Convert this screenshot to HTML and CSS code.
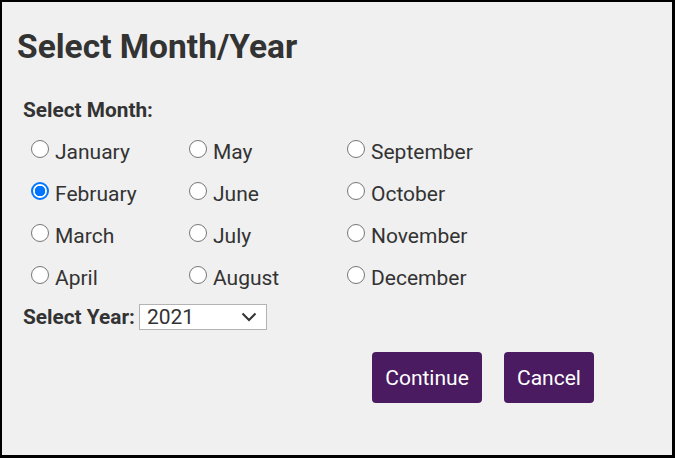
FILE: index.html
```html
<!DOCTYPE html>
<html>
<head>
<meta charset="utf-8">
<link rel="stylesheet" href="styles.css">
</head>
<body>
<div class="dialog">
  <h1 class="title">Select Month/Year</h1>
  <div class="form">
    <div class="field-label">Select Month:</div>
    <div class="months">
      <label class="opt"><input type="radio" name="m"><span>January</span></label>
      <label class="opt"><input type="radio" name="m"><span>May</span></label>
      <label class="opt"><input type="radio" name="m"><span>September</span></label>
      <label class="opt"><input type="radio" name="m" checked><span>February</span></label>
      <label class="opt"><input type="radio" name="m"><span>June</span></label>
      <label class="opt"><input type="radio" name="m"><span>October</span></label>
      <label class="opt"><input type="radio" name="m"><span>March</span></label>
      <label class="opt"><input type="radio" name="m"><span>July</span></label>
      <label class="opt"><input type="radio" name="m"><span>November</span></label>
      <label class="opt"><input type="radio" name="m"><span>April</span></label>
      <label class="opt"><input type="radio" name="m"><span>August</span></label>
      <label class="opt"><input type="radio" name="m"><span>December</span></label>
    </div>
    <div class="year-row">
      <span class="field-label inline">Select Year:</span>
      <div class="select-wrap">
        <select class="year">
          <option>2021</option>
        </select>
        <svg class="chev" width="16" height="10" viewBox="0 0 16 10"><path d="M1.5 1.5 L8 8 L14.5 1.5" fill="none" stroke="#333" stroke-width="2"/></svg>
      </div>
    </div>
    <div class="actions">
      <button class="btn btn-continue">Continue</button>
      <button class="btn btn-cancel">Cancel</button>
    </div>
  </div>
</div>
</body>
</html>
```

FILE: styles.css
```css
* { box-sizing: border-box; }
html, body { margin: 0; padding: 0; }
body {
  font-family: Roboto, "Liberation Sans", sans-serif;
  color: #333;
  background: #fff;
}
.dialog {
  width: 675px;
  height: 458px;
  background: #f0f0f0;
  border-style: solid;
  border-color: #000;
  border-width: 2px 3px 3px 2px;
  padding: 0 0 0 15px;
}
.title {
  margin: 0;
  padding-top: 25px;
  font-size: 33.5px;
  line-height: 40px;
  font-weight: 700;
  color: #333;
}
.form {
  padding-left: 6px;
  padding-top: 31px;
}
.field-label {
  font-size: 20.8px;
  line-height: 24px;
  font-weight: 700;
  color: #333;
}
.months {
  display: grid;
  grid-template-columns: 158px 158px 158px;
  grid-auto-rows: 42px;
  padding-left: 8px;
  margin-top: 8px;
}
.opt {
  display: flex;
  align-items: center;
  gap: 6px;
  font-size: 21px;
  line-height: 42px;
}
.opt span { position: relative; top: 1px; }
.opt input {
  appearance: none;
  -webkit-appearance: none;
  margin: 0;
  width: 18px;
  height: 18px;
  border: 1px solid #767676;
  border-radius: 50%;
  background: #fff;
  position: relative;
  top: -2px;
}
.opt input:checked {
  border: 2px solid #0075ff;
  background: radial-gradient(circle, #0075ff 0 5px, #fff 5.5px);
}
.year-row {
  display: flex;
  align-items: center;
  gap: 4px;
  margin-top: 6px;
}
.field-label.inline { line-height: 26px; }
.select-wrap {
  position: relative;
  width: 128px;
  height: 26px;
}
.year {
  appearance: none;
  -webkit-appearance: none;
  width: 100%;
  height: 100%;
  border: 1px solid #b3b3b3;
  border-radius: 0;
  background: #fff;
  font-family: Roboto, "Liberation Sans", sans-serif;
  font-size: 21px;
  color: #333;
  padding: 0 0 0 7px;
  line-height: 24px;
}
.chev {
  position: absolute;
  right: 10px;
  top: 8px;
  pointer-events: none;
}
.actions {
  display: flex;
  justify-content: flex-end;
  gap: 22px;
  padding-right: 78px;
  margin-top: 22px;
}
.btn {
  height: 51px;
  border: none;
  border-radius: 4px;
  background: #4a1b60;
  color: #fff;
  font-family: Roboto, "Liberation Sans", sans-serif;
  font-size: 21px;
  padding: 0;
}
.btn-continue { width: 110px; }
.btn-cancel { width: 90px; }
```
